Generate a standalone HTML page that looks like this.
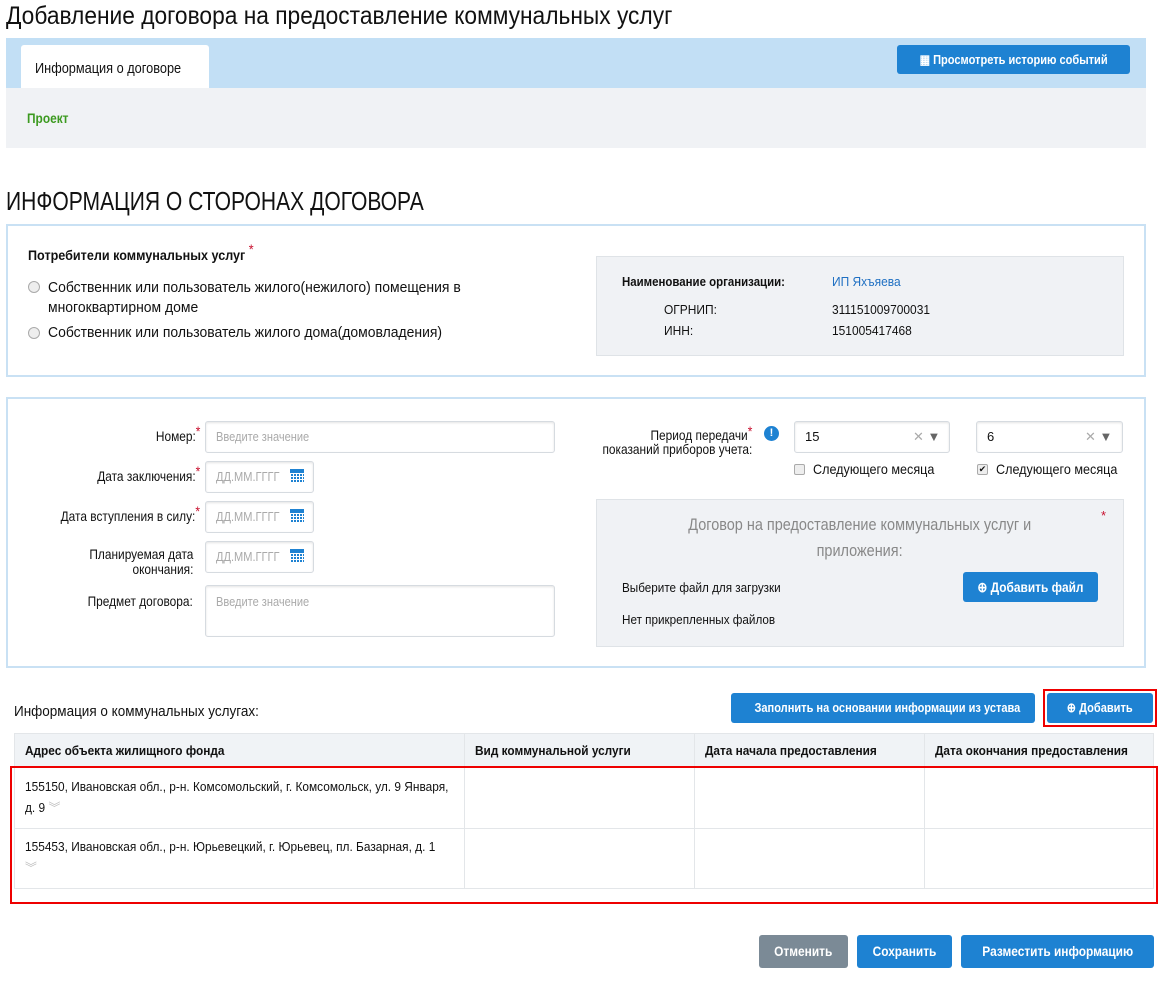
<!DOCTYPE html><html><head><meta charset="utf-8"><style>
*{box-sizing:border-box;margin:0;padding:0}
body{width:1174px;height:984px;background:#fff;font-family:"Liberation Sans",sans-serif;color:#111;position:relative;overflow:hidden;font-size:13px}
.a{position:absolute;white-space:nowrap}
.s{display:inline-block;transform:scaleX(.85);transform-origin:0 0;white-space:nowrap}
.sr{display:inline-block;transform:scaleX(.85);transform-origin:100% 0;white-space:nowrap}
.sc{display:inline-block;transform:scaleX(.85);transform-origin:50% 0;white-space:nowrap}
.btn{position:absolute;background:#1e82d2;color:#fff;font-weight:bold;font-size:14px;border-radius:3px;text-align:center;white-space:nowrap}
.inp{position:absolute;border:1px solid #d6dbe0;border-radius:3px;background:#fff;color:#aaa;font-size:13px;padding-left:10px;box-shadow:inset 0 1px 2px #e4e4e4;white-space:nowrap;overflow:hidden}
.lbl{position:absolute;text-align:right;font-size:14px;color:#111;white-space:nowrap}
.st{color:#c8102e}
.cal{position:absolute;width:14px;height:14px;background:#1e82d2;border-top:4px solid #1e82d2;background-image:linear-gradient(#fff 1px,transparent 1px),linear-gradient(90deg,#fff 1px,transparent 1px);background-size:3px 3px}
.rad{position:absolute;width:12px;height:12px;border:1px solid #aaa;border-radius:50%;background:#eee}
td,th{border:1px solid #e3e6e9}
</style></head><body>
<div class="a" style="left:6px;top:2px;font-size:25px"><span class="s" style="transform:scaleX(.91)">Добавление договора на предоставление коммунальных услуг</span></div>
<div class="a" style="left:6px;top:38px;width:1140px;height:50px;background:#c2dff5"></div>
<div class="a" style="left:21px;top:45px;width:188px;height:43px;background:#fff;border-radius:3px 3px 0 0;font-size:15px;padding:15px 0 0 14px"><span class="s">Информация о договоре</span></div>
<div class="btn" style="left:897px;top:45px;width:233px;height:29px;line-height:29px;font-size:13px"><span class="sc">▦ Просмотреть историю событий</span></div>
<div class="a" style="left:6px;top:88px;width:1140px;height:60px;background:#f0f2f5"></div>
<div class="a" style="left:27px;top:110px;color:#3c9a20;font-weight:bold;font-size:14px"><span class="s">Проект</span></div>
<div class="a" style="left:6px;top:186px;font-size:26px"><span class="s" style="transform:scaleX(.81)">ИНФОРМАЦИЯ О СТОРОНАХ ДОГОВОРА</span></div>

<div class="a" style="left:6px;top:224px;width:1140px;height:153px;border:2px solid #c9e1f4"></div>
<div class="a" style="left:28px;top:247px;font-weight:bold;font-size:14px"><span class="s" style="transform:scaleX(.9)">Потребители коммунальных услуг <span class="st" style="position:relative;top:-6px;font-weight:normal">*</span></span></div>
<div class="rad" style="left:28px;top:281px"></div>
<div class="a" style="left:48px;top:278px;font-size:15px;line-height:20px"><span class="s" style="transform:scaleX(.93)">Собственник или пользователь жилого(нежилого) помещения в<br>многоквартирном доме</span></div>
<div class="rad" style="left:28px;top:327px"></div>
<div class="a" style="left:48px;top:324px;font-size:15px"><span class="s" style="transform:scaleX(.93)">Собственник или пользователь жилого дома(домовладения)</span></div>
<div class="a" style="left:596px;top:256px;width:528px;height:100px;background:#f0f2f5;border:1px solid #dfe3e7"></div>
<div class="a" style="left:622px;top:274px;font-weight:bold;font-size:13px"><span class="s" style="transform:scaleX(.88)">Наименование организации:</span></div>
<div class="a" style="left:832px;top:274px;color:#1e6fc2;text-decoration:underline"><span class="s" style="transform:scaleX(.92)">ИП Яхъяева</span></div>
<div class="a" style="left:664px;top:302px"><span class="s" style="transform:scaleX(.92)">ОГРНИП:</span></div><div class="a" style="left:832px;top:302px"><span class="s" style="transform:scaleX(.92)">311151009700031</span></div>
<div class="a" style="left:664px;top:323px"><span class="s" style="transform:scaleX(.92)">ИНН:</span></div><div class="a" style="left:832px;top:323px"><span class="s" style="transform:scaleX(.92)">151005417468</span></div>

<div class="a" style="left:6px;top:397px;width:1140px;height:271px;border:2px solid #c9e1f4"></div>
<div class="lbl" style="left:20px;width:180px;top:428px"><span class="sr">Номер:<span class="st" style="position:relative;top:-5px">*</span></span></div>
<div class="inp" style="left:205px;top:421px;width:350px;height:32px;line-height:30px"><span class="s">Введите значение</span></div>
<div class="lbl" style="left:20px;width:180px;top:468px"><span class="sr">Дата заключения:<span class="st" style="position:relative;top:-5px">*</span></span></div>
<div class="inp" style="left:205px;top:461px;width:109px;height:32px;line-height:30px"><span class="s">ДД.ММ.ГГГГ</span></div><div class="cal" style="left:290px;top:469px"></div>
<div class="lbl" style="left:20px;width:180px;top:508px"><span class="sr">Дата вступления в силу:<span class="st" style="position:relative;top:-5px">*</span></span></div>
<div class="inp" style="left:205px;top:501px;width:109px;height:32px;line-height:30px"><span class="s">ДД.ММ.ГГГГ</span></div><div class="cal" style="left:290px;top:509px"></div>
<div class="lbl" style="left:20px;width:173px;top:547px;line-height:15px"><span class="sr">Планируемая дата<br>окончания:</span></div>
<div class="inp" style="left:205px;top:541px;width:109px;height:32px;line-height:30px"><span class="s">ДД.ММ.ГГГГ</span></div><div class="cal" style="left:290px;top:549px"></div>
<div class="lbl" style="left:20px;width:173px;top:593px"><span class="sr">Предмет договора:</span></div>
<div class="inp" style="left:205px;top:585px;width:350px;height:52px;padding-top:8px"><span class="s">Введите значение</span></div>

<div class="lbl" style="left:576px;width:172px;top:428px;line-height:14px"><span class="sr">Период передачи<span class="st" style="position:relative;top:-4px">*</span><br>показаний приборов учета:</span></div>
<div class="a" style="left:764px;top:426px;width:15px;height:15px;border-radius:50%;background:#1e82d2;color:#fff;font-weight:bold;font-size:11px;text-align:center;line-height:15px">!</div>
<div class="inp" style="left:794px;top:421px;width:156px;height:32px;line-height:30px;color:#111">15<span style="position:absolute;left:118px;color:#aaa">✕ <span style="color:#666">▼</span></span></div>
<div class="inp" style="left:976px;top:421px;width:147px;height:32px;line-height:30px;color:#111">6<span style="position:absolute;left:108px;color:#aaa">✕ <span style="color:#666">▼</span></span></div>
<div class="a" style="left:794px;top:464px;width:11px;height:11px;border:1px solid #aaa;border-radius:2px;background:#eee"></div>
<div class="a" style="left:813px;top:461px;font-size:14px"><span class="s" style="transform:scaleX(.9)">Следующего месяца</span></div>
<div class="a" style="left:977px;top:464px;width:11px;height:11px;border:1px solid #aaa;border-radius:2px;background:#eee;font-size:9px;line-height:9px;text-align:center">✔</div>
<div class="a" style="left:996px;top:461px;font-size:14px"><span class="s" style="transform:scaleX(.9)">Следующего месяца</span></div>
<div class="a" style="left:596px;top:499px;width:528px;height:148px;background:#f0f2f5;border:1px solid #dfe3e7"></div>
<div class="a" style="left:596px;top:512px;width:528px;text-align:center;font-size:17px;color:#888;line-height:26px"><span class="sc">Договор на предоставление коммунальных услуг и</span><br><span class="sc">приложения:</span></div>
<div class="a st" style="left:1101px;top:508px">*</div>
<div class="a" style="left:622px;top:580px"><span class="s" style="transform:scaleX(.9)">Выберите файл для загрузки</span></div>
<div class="a" style="left:622px;top:612px"><span class="s" style="transform:scaleX(.9)">Нет прикрепленных файлов</span></div>
<div class="btn" style="left:963px;top:572px;width:135px;height:30px;line-height:30px"><span class="sc">⊕ Добавить файл</span></div>

<div class="a" style="left:14px;top:703px;font-size:15px"><span class="s" style="transform:scaleX(.9)">Информация о коммунальных услугах:</span></div>
<div class="btn" style="left:731px;top:693px;width:304px;height:30px;line-height:30px;font-size:13px"><span class="sc">Заполнить на основании информации из устава</span></div>
<div class="a" style="left:1043px;top:689px;width:114px;height:38px;border:2px solid #e00"></div>
<div class="btn" style="left:1047px;top:693px;width:106px;height:30px;line-height:30px;font-size:13px"><span class="sc">⊕ Добавить</span></div>
<table class="a" style="left:14px;top:733px;width:1140px;border-collapse:collapse;font-size:13px;table-layout:fixed;white-space:nowrap">
<tr style="background:#f0f3f6;height:33px;font-weight:bold;text-align:left"><th style="width:450px;padding-left:10px"><span class="s" style="transform:scaleX(.91)">Адрес объекта жилищного фонда</span></th><th style="width:230px;padding-left:10px"><span class="s" style="transform:scaleX(.91)">Вид коммунальной услуги</span></th><th style="width:230px;padding-left:10px"><span class="s" style="transform:scaleX(.91)">Дата начала предоставления</span></th><th style="padding-left:10px"><span class="s" style="transform:scaleX(.91)">Дата окончания предоставления</span></th></tr>
<tr style="height:62px"><td style="padding:0 10px;line-height:21px;font-size:12.5px"><span class="s" style="transform:scaleX(.95)">155150, Ивановская обл., р-н. Комсомольский, г. Комсомольск, ул. 9 Января,<br>д. 9 <span style="color:#bbb">︾</span></span></td><td></td><td></td><td></td></tr>
<tr style="height:60px"><td style="padding:0 10px;line-height:21px;font-size:12.5px;vertical-align:top;padding-top:8px"><span class="s" style="transform:scaleX(.95)">155453, Ивановская обл., р-н. Юрьевецкий, г. Юрьевец, пл. Базарная, д. 1<br><span style="color:#bbb">︾</span></span></td><td></td><td></td><td></td></tr>
</table>
<div class="a" style="left:10px;top:766px;width:1148px;height:138px;border:2px solid #e00"></div>

<div class="btn" style="left:759px;top:935px;width:89px;height:33px;line-height:33px;background:#7b8a96"><span class="sc">Отменить</span></div>
<div class="btn" style="left:857px;top:935px;width:95px;height:33px;line-height:33px"><span class="sc">Сохранить</span></div>
<div class="btn" style="left:961px;top:935px;width:193px;height:33px;line-height:33px"><span class="sc">Разместить информацию</span></div>
</body></html>
